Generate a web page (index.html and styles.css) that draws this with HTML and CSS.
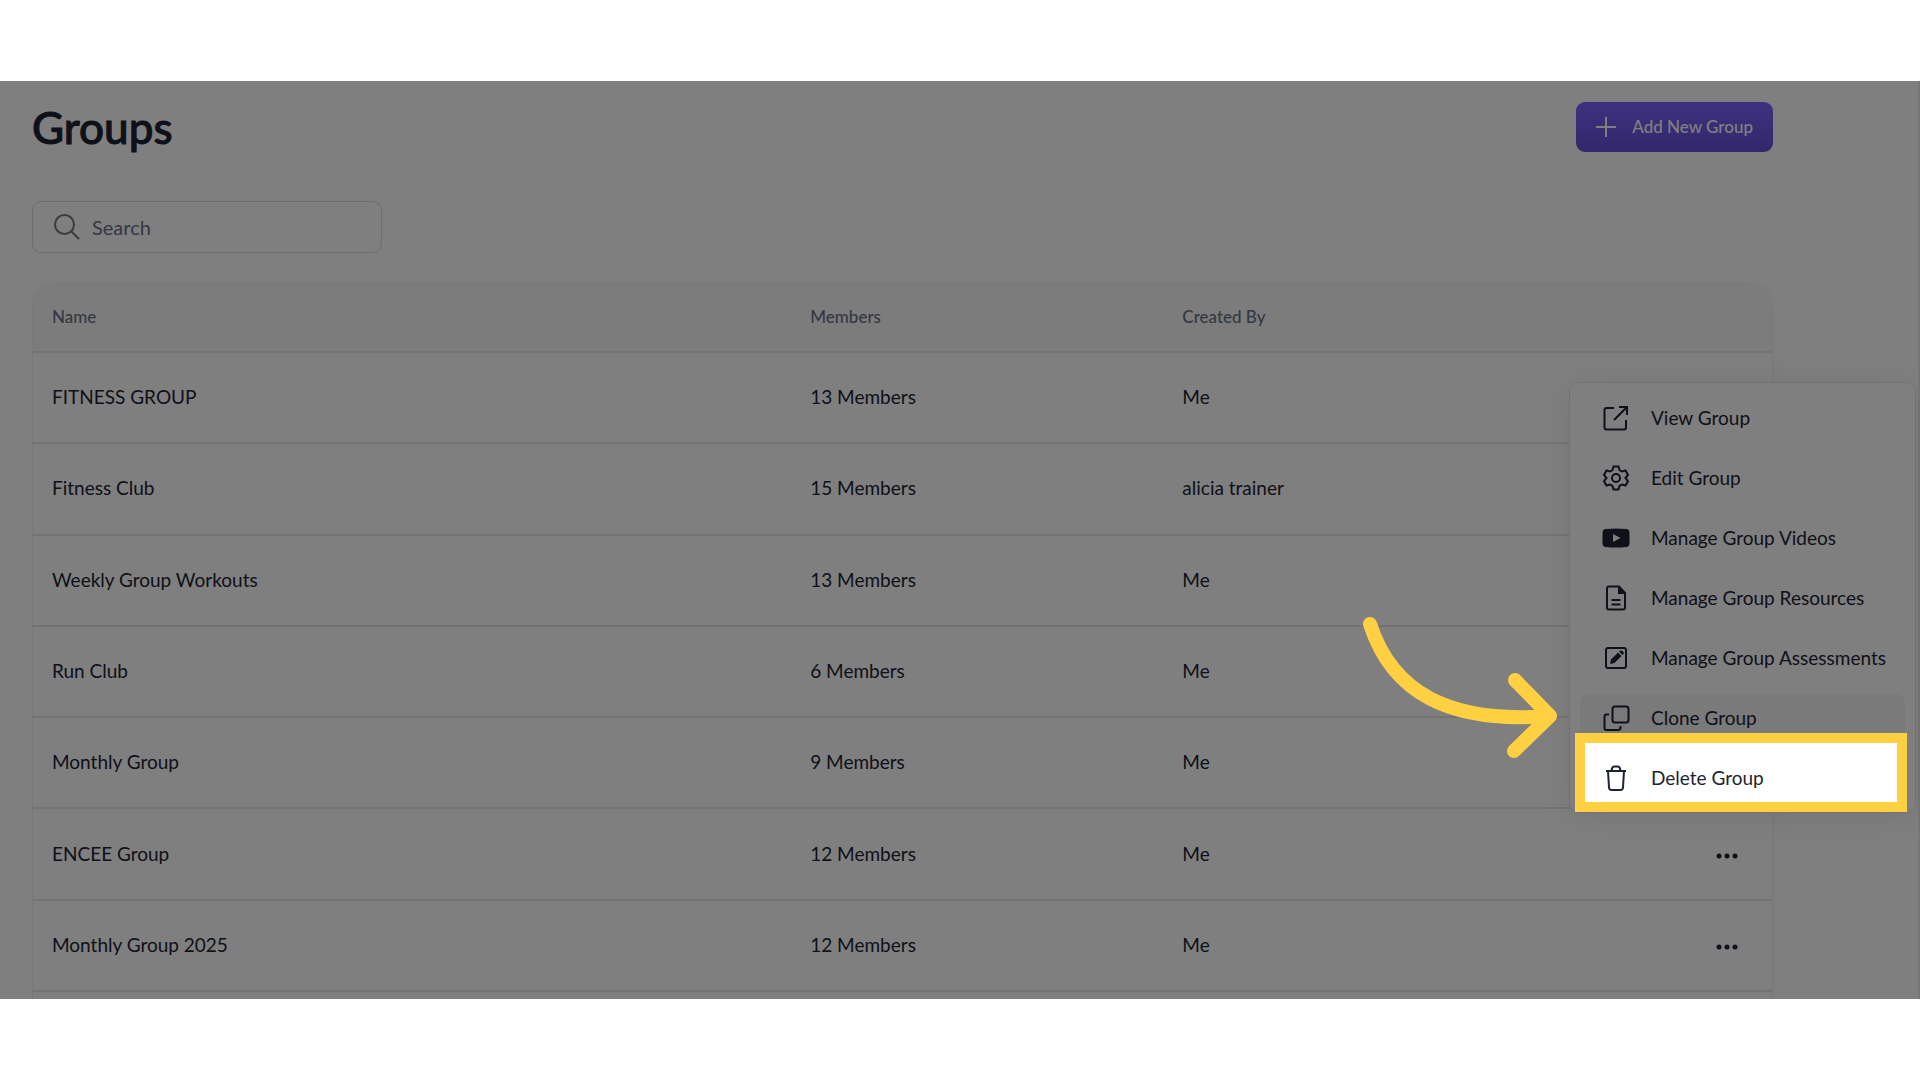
FILE: index.html
```html
<!DOCTYPE html>
<html lang="en">
<head>
    <meta charset="UTF-8">
    <meta name="viewport" content="width=device-width, initial-scale=1.0">
    <title>Groups</title>
    <link rel="stylesheet" href="styles.css">
</head>
<body>

<main class="stage">
    <header class="page-header">
        <h1>Groups</h1>
        <button type="button" class="btn-add">
            <svg width="20" height="20" viewBox="0 0 20 20" fill="none" stroke="currentColor" stroke-width="2"><path d="M10 0v20M0 10h20"/></svg>
            Add New Group
        </button>
    </header>

    <label class="search">
        <svg width="26" height="26" viewBox="0 0 26 26" fill="none" stroke="currentColor" stroke-width="2"><circle cx="10.5" cy="10.5" r="9.5"/><path d="M17 17l8 8"/></svg>
        <input type="text" placeholder="Search" aria-label="Search">
    </label>

    <div class="card">
        <table>
            <thead>
                <tr>
                    <th class="col-name">Name</th>
                    <th class="col-members">Members</th>
                    <th>Created By</th>
                    <th class="col-actions"></th>
                </tr>
            </thead>
            <tbody>
                <tr><td>FITNESS GROUP</td><td>13 Members</td><td>Me</td><td></td></tr>
                <tr><td>Fitness Club</td><td>15 Members</td><td>alicia trainer</td><td></td></tr>
                <tr><td>Weekly Group Workouts</td><td>13 Members</td><td>Me</td><td></td></tr>
                <tr><td>Run Club</td><td>6 Members</td><td>Me</td><td></td></tr>
                <tr><td>Monthly Group</td><td>9 Members</td><td>Me</td><td></td></tr>
                <tr>
                    <td>ENCEE Group</td><td>12 Members</td><td>Me</td>
                    <td><button type="button" class="btn-more" aria-label="More"><svg width="22" height="6" viewBox="0 0 22 6" fill="currentColor"><circle cx="3" cy="3" r="2.5"/><circle cx="11" cy="3" r="2.5"/><circle cx="19" cy="3" r="2.5"/></svg></button></td>
                </tr>
                <tr>
                    <td>Monthly Group 2025</td><td>12 Members</td><td>Me</td>
                    <td><button type="button" class="btn-more" aria-label="More"><svg width="22" height="6" viewBox="0 0 22 6" fill="currentColor"><circle cx="3" cy="3" r="2.5"/><circle cx="11" cy="3" r="2.5"/><circle cx="19" cy="3" r="2.5"/></svg></button></td>
                </tr>
            </tbody>
        </table>
    </div>

    <div class="menu">
        <button type="button">
            <svg viewBox="0 0 28 28"><path d="M12 4H4.500Q2.500 4 2.500 6V23.500Q2.500 25.500 4.500 25.500H22Q24 25.500 24 23.500V16M17 3H25V11M25 3L12 16"/></svg>
            View Group
        </button>
        <button type="button">
            <svg viewBox="0 0 28 28"><circle cx="14" cy="14" r="4"/><path d="M11.500 2.500h5l1 3.500 2.500 1.500 3.500-1 2.500 4.500-2.500 3 2.500 3-2.500 4.500-3.500-1-2.500 1.500-1 3.500h-5l-1-3.500L8 20.500l-3.500 1L2 17l2.500-3L2 11l2.500-4.500 3.500 1L10.500 6z"/></svg>
            Edit Group
        </button>
        <button type="button">
            <svg viewBox="0 0 28 28"><path class="solid" d="M4 5Q14 4 24 5Q27.500 5 27.500 9V19Q27.500 23 24 23Q14 24 4 23Q.5 23 .5 19V9Q.5 5 4 5zM11 10v8l7.500-4z"/></svg>
            Manage Group Videos
        </button>
        <button type="button">
            <svg viewBox="0 0 28 28"><path d="M7 2.500h10l6 6.500v14.500q0 2-2 2H7q-2 0-2-2v-19q0-2 2-2zM9.500 16h9M9.500 20.500h9"/><path class="solid" d="M16 2.500V10h7.500z"/></svg>
            Manage Group Resources
        </button>
        <button type="button">
            <svg viewBox="0 0 28 28"><rect x="4" y="4" width="20" height="20" rx="2"/><path class="solid" d="M8 20l1-4.500 7-7 3.500 3.500-7 7zM17 7.500l1.500-1q2-.5 3 1.500t-1 3z"/></svg>
            Manage Group Assessments
        </button>
        <button type="button" class="active">
            <svg viewBox="0 0 28 28"><rect x="10.500" y="2.500" width="16" height="16" rx="2.500"/><path d="M7 10.500H4.500Q2.500 10.500 2.500 12.500V24Q2.500 26 4.500 26H16Q18.500 26 18.500 24V22"/></svg>
            Clone Group
        </button>
        <button type="button">
            <svg viewBox="0 0 28 28"><path d="M4 7h20M6 7l1 16.500q.2 2.500 2.500 2.500h9q2.300 0 2.500-2.500L22 7M9.500 6.500q.5-4 3-4h3q2.500 0 3 4"/></svg>
            Delete Group
        </button>
        <div class="spotlight"></div>
    </div>

    <svg class="arrow" width="188" height="142" viewBox="0 0 188 142"><path d="M7 7C29 75 85 107 187 99M152 63l35 36-36 35"/></svg>
</main>

</body>
</html>
```
FILE: styles.css
```css
* {
    box-sizing: border-box;
}
body {
    margin: 0;
    min-height: 100vh;
    display: flex;
    align-items: center;
    background-color: #ffffff;
    font-family: Lato, "Open Sans", sans-serif;
    font-size: 19px;
    line-height: 24px;
    color: #1d2333;
}
button, input {
    font: inherit;
    color: inherit;
}
.stage {
    position: relative;
    flex: 1;
    overflow: hidden;
    padding: 20px 147px 0 32px;
    background: linear-gradient(#ededed, #ededed) right / 2px 100% no-repeat #ffffff;
}
.page-header {
    display: flex;
    justify-content: space-between;
    align-items: center;
    height: 52px;
}
h1 {
    margin: 0;
    font-size: 44px;
    line-height: 52px;
    font-weight: 500;
    -webkit-text-stroke: 1px;
}
.btn-add {
    display: flex;
    align-items: center;
    gap: 16px;
    height: 50px;
    padding: 0 20px;
    border: none;
    border-radius: 9px;
    background: linear-gradient(#7c62ff, #6650d6);
    color: #ffffff;
    font-size: 17px;
    font-weight: 500;
}
.search {
    display: flex;
    align-items: center;
    gap: 12px;
    width: 350px;
    height: 52px;
    margin: 48px 0 30px;
    padding: 0 21px;
    border: 1px solid #dadbdd;
    border-radius: 9px;
    color: #777777;
}
.search input {
    flex: 1;
    min-width: 0;
    padding: 0;
    border: none;
    outline: none;
    background: none;
    font-size: 20px;
}
.search input::placeholder {
    color: #687085;
    opacity: 1;
}
.card {
    padding-bottom: 7px;
    border: 1px solid #f0f0f1;
    border-bottom: none;
    border-radius: 24px 24px 0 0;
    box-shadow: 0 0 24px rgba(0, 0, 0, 0.03);
    overflow: hidden;
}
table {
    width: 100%;
    height: 708px;
    border-collapse: collapse;
    table-layout: fixed;
}
th, td {
    padding: 0 19px 1px;
    text-align: left;
    border-bottom: 2px solid #e6e7ea;
}
th {
    height: 68px;
    background-color: #f9f9fa;
    color: #687085;
    font-size: 17px;
    font-weight: 500;
}
.col-name {
    width: 43.6%;
}
.col-members {
    width: 21.4%;
}
.col-actions {
    width: 120px;
}
td:last-child {
    padding-right: 34px;
    text-align: right;
}
.btn-more {
    display: inline-flex;
    padding: 0;
    border: none;
    background: none;
    vertical-align: middle;
}
.menu {
    position: absolute;
    top: 301px;
    right: 4px;
    width: 347px;
    display: flex;
    flex-direction: column;
    gap: 12px;
    padding: 11px 10px 10px;
    border: 1px solid #e4e5e8;
    border-radius: 10px;
    background-color: #ffffff;
    box-shadow: 0 4px 36px rgba(0, 0, 0, 0.09);
}
.menu button {
    display: flex;
    align-items: center;
    gap: 21px;
    height: 48px;
    padding: 0 22px;
    border: none;
    border-radius: 9px;
    background: none;
    white-space: nowrap;
}
.menu .active {
    background-color: #f4f4f4;
}
.menu svg {
    flex: none;
    width: 28px;
    height: 28px;
    fill: none;
    stroke: currentColor;
    stroke-width: 2;
}
.menu .solid {
    fill: currentColor;
    fill-rule: evenodd;
    stroke: none;
}
/* highlighted item, the rest of the page is dimmed */
.spotlight {
    position: absolute;
    left: 5px;
    right: 8px;
    bottom: 0;
    height: 79px;
    border: 10px solid #ffd042;
    box-shadow: 0 0 0 3000px rgba(0, 0, 0, 0.5);
    pointer-events: none;
}
.arrow {
    position: absolute;
    top: 536px;
    right: 369px;
    overflow: visible;
    fill: none;
    stroke: #ffd042;
    stroke-width: 14;
    stroke-linecap: round;
    stroke-linejoin: round;
}
```
